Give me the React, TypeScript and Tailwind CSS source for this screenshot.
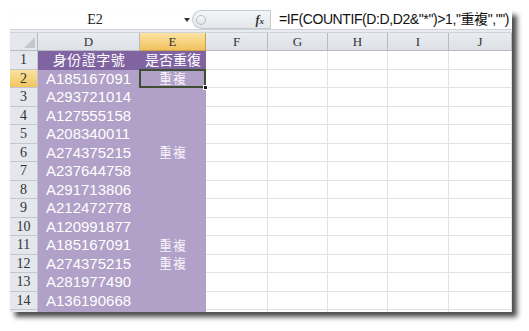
import React from "react";

const cols = [
  { key: "D", w: "w-[102px]" },
  { key: "E", w: "w-[66px]" },
  { key: "F", w: "w-[62px]" },
  { key: "G", w: "w-[60px]" },
  { key: "H", w: "w-[60px]" },
  { key: "I", w: "w-[61px]" },
  { key: "J", w: "w-[63px]" },
];

const ids = [
  "A185167091", "A293721014", "A127555158", "A208340011", "A274375215",
  "A237644758", "A291713806", "A212472778", "A120991877", "A185167091",
  "A274375215", "A281977490", "A136190668",
];
const dup = [true, false, false, false, true, false, false, false, false, true, true, false, false];

const serif = "font-['Liberation_Serif','Noto_Sans_CJK_TC',serif]";
const sans = "font-['Liberation_Sans','Noto_Sans_CJK_TC',sans-serif]";

function RowHead({ n, active }: { n?: number; active?: boolean }) {
  return (
    <div
      className={`w-[28px] shrink-0 h-full flex items-center justify-center border-r border-b border-[#c3c7cd] text-[14px] text-[#333] ${serif} ${
        active ? "bg-gradient-to-b from-[#fbe3a0] to-[#f2c45f]" : "bg-[#e4e7eb]"
      }`}
    >
      {n}
    </div>
  );
}

function BlankCells() {
  return (
    <>
      {cols.slice(2).map(c => (
        <div key={c.key} className={`${c.w} shrink-0 h-full border-r border-b border-[#e2e2e2] bg-white`} />
      ))}
    </>
  );
}

export default function App() {
  return (
    <div className="min-h-screen bg-white pt-[10px] pl-[10px]">
      <div className="relative w-[502px] h-[302px] overflow-hidden bg-white shadow-[5px_5px_5px_rgba(0,0,0,0.7)]">
        {/* formula bar */}
        <div className="h-[19px] flex items-stretch bg-white">
          <div className="w-[182px] shrink-0 relative flex items-center">
            <span className={`w-full text-center text-[14px] text-[#222] ${serif} -ml-[6px]`}>E2</span>
            <span className="absolute right-[2px] top-[8px] w-0 h-0 border-l-[3px] border-r-[3px] border-t-[4px] border-l-transparent border-r-transparent border-t-[#333]" />
          </div>
          <div className="w-[78px] shrink-0 flex items-center rounded-l-full border border-r-0 border-[#c5cad1] bg-gradient-to-b from-[#f4f5f7] to-[#e4e7eb]">
            <span className="ml-[3px] w-[10px] h-[10px] rounded-full border border-[#b9bec6] bg-gradient-to-b from-[#fafafa] to-[#dfe2e6]" />
            <span className={`ml-auto mr-[6px] text-[12px] italic font-bold text-[#333] ${serif}`}>
              f<span className="text-[9px]">x</span>
            </span>
          </div>
          <div className={`flex-1 min-w-0 flex items-center border-l border-[#c5cad1] pl-[8px] whitespace-nowrap overflow-hidden text-[14px] text-[#111] ${sans} tracking-[-0.4px]`}>
            =IF(COUNTIF(D:D,D2&amp;"*")&gt;1,"重複","")
          </div>
        </div>
        <div className="h-[4px] bg-[#e8ebef] border-t border-b border-[#cfd3d8]" />

        {/* column headers */}
        <div className="h-[18px] flex">
          <div className="w-[28px] shrink-0 h-full relative bg-[#e4e7eb] border-r border-b border-[#b8bcc2]">
            <span className="absolute right-[2px] bottom-[2px] w-0 h-0 border-l-[11px] border-b-[11px] border-l-transparent border-b-[#c4c8cd]" />
          </div>
          {cols.map(c => (
            <div
              key={c.key}
              className={`${c.w} shrink-0 h-full flex items-center justify-center border-r border-b text-[13px] text-[#333] ${serif} ${
                c.key === "E"
                  ? "bg-gradient-to-b from-[#fbe4a3] to-[#f1c15c] border-[#c9a24a]"
                  : "bg-gradient-to-b from-[#e9ecf0] to-[#dde1e6] border-[#b8bcc2]"
              }`}
            >
              {c.key}
            </div>
          ))}
        </div>

        {/* row 1 */}
        <div className="h-[18.5px] flex">
          <RowHead n={1} />
          <div className={`w-[102px] shrink-0 h-full flex items-center justify-center bg-[#8064a2] text-white text-[14px] ${sans} tracking-[0.5px]`}>
            身份證字號
          </div>
          <div className={`w-[66px] shrink-0 h-full flex items-center justify-center bg-[#8064a2] text-white text-[14px] ${sans}`}>
            是否重復
          </div>
          <BlankCells />
        </div>

        {ids.map((id, i) => (
          <div key={i} className="h-[18.5px] flex">
            <RowHead n={i + 2} active={i === 0} />
            <div className={`w-[102px] shrink-0 h-full flex items-center pl-[8px] bg-[#b1a0c7] text-white text-[15px] ${sans}`}>
              {id}
            </div>
            <div className={`w-[66px] shrink-0 h-full flex items-center justify-center bg-[#b1a0c7] text-[#f6f3fa] text-[13px] ${sans} tracking-[1px]`}>
              {dup[i] ? "重複" : ""}
            </div>
            <BlankCells />
          </div>
        ))}
        <div className="h-[18.5px] flex">
          <RowHead />
          <div className="w-[168px] shrink-0 h-full bg-[#b1a0c7]" />
          <BlankCells />
        </div>

        {/* selection on E2 */}
        <div className="absolute left-[129px] top-[58.5px] w-[67px] h-[19.5px] border-2 border-[#3f4d33] pointer-events-none" />
        <div className="absolute left-[193px] top-[74.5px] w-[5px] h-[5px] bg-[#1b1b1b] border border-white" />
      </div>
    </div>
  );
}
